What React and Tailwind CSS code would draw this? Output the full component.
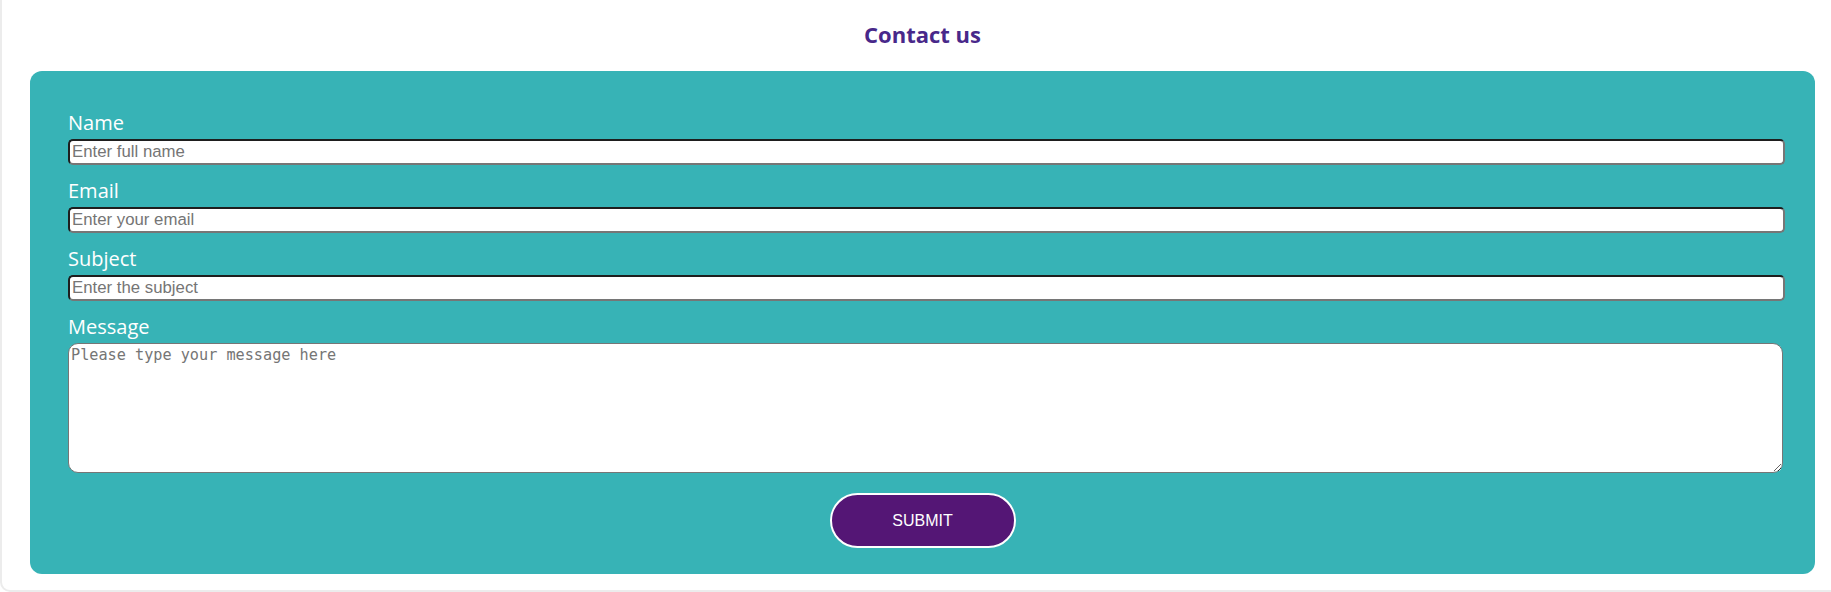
import React from "react";

const fields = [
  { label: "Name", placeholder: "Enter full name", type: "text" },
  { label: "Email", placeholder: "Enter your email", type: "email" },
  { label: "Subject", placeholder: "Enter the subject", type: "text" },
];

export default function App() {
  return (
    <div className="w-[1831px] h-[592px] overflow-hidden bg-white">
      <div className="w-[1845px] border-2 border-t-0 border-[#ececec] rounded-b-[10px] px-[28px] pt-[21px] pb-[16px]">
        <h1 className="text-center font-['Open_Sans',sans-serif] font-bold text-[22px] leading-[26px] text-[#48288a]">
          Contact us
        </h1>

        {/* form panel */}
        <form
          className="mt-[24px] bg-[#37b3b6] rounded-[12px] px-[38px] pt-[38px] pb-[26px] font-['Open_Sans',sans-serif]"
          onSubmit={(e) => e.preventDefault()}
        >
          {fields.map((f) => (
            <div key={f.label} className="mb-[12px]">
              <label className="block text-white text-[20px] leading-[27px] mb-[3px]">
                {f.label}
              </label>
              <input
                type={f.type}
                placeholder={f.placeholder}
                className="block w-[1717px] h-[26px] px-[2px] bg-white rounded-[5px] border-2 border-t-[#1e1e1e] border-l-[#1e1e1e] border-b-[#767676] border-r-[#767676] font-['Liberation_Sans',Arial,sans-serif] text-[16.8px] placeholder:text-[#757575] outline-none"
              />
            </div>
          ))}

          <label className="block text-white text-[20px] leading-[27px] mb-[3px]">
            Message
          </label>
          <textarea
            placeholder="Please type your message here"
            className="block w-[1715px] h-[130px] px-[2px] py-[2px] bg-white rounded-[10px] border border-[#767676] font-['DejaVu_Sans_Mono',monospace] text-[15.2px] leading-[18px] placeholder:text-[#757575] outline-none"
          />

          <div className="flex justify-center mt-[20px]">
            <button
              type="submit"
              className="w-[186px] h-[55px] rounded-full border-2 border-white bg-[#541675] text-white font-['Liberation_Sans',Arial,sans-serif] text-[16px]"
            >
              SUBMIT
            </button>
          </div>
        </form>
      </div>
    </div>
  );
}
